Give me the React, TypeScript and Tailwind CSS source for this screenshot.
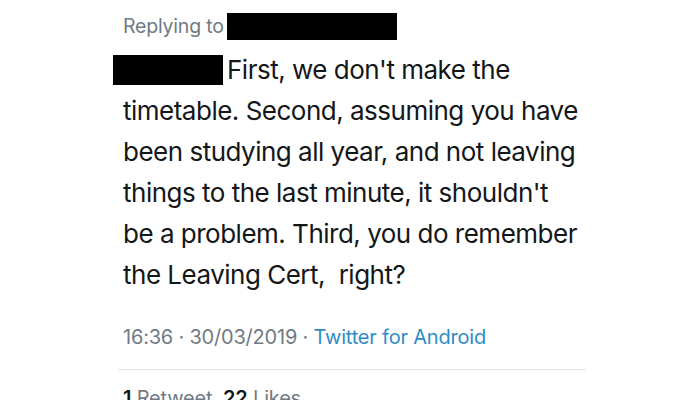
import React from 'react';

export default function App() {
  return (
    <div className="w-[700px] h-[400px] overflow-hidden bg-white" style={{ fontFamily: 'Inter, "Noto Sans", sans-serif' }}>
      <div className="pl-[123px] pr-[100px] pt-[12px]">
        {/* Reply header */}
        <div className="flex items-center h-[28px] text-[19.5px] text-[#707a84] tracking-[-0.2px]">
          <span className="translate-y-[1px]">Replying to</span>
          <span className="ml-[3px] inline-block w-[170px] h-[27px] bg-black" />
        </div>

        {/* Tweet body */}
        <p className="mt-[9px] text-[26px] leading-[41px] text-[#14171a] tracking-[-0.5px] whitespace-nowrap">
          <span className="-ml-[10px] mr-[4px] inline-block w-[110px] h-[30px] bg-black align-[-6px]" />
          First, we don't make the<br />
          timetable. Second, assuming you have<br />
          been studying all year, and not leaving<br />
          things to the last minute, it shouldn't<br />
          be a problem. Third, you do remember<br />
          the Leaving Cert,&nbsp; right?
        </p>

        {/* Meta */}
        <div className="mt-[27px] text-[20px] text-[#707a84] tracking-[-0.2px]">
          16:36 · 30/03/2019 · <span className="text-[#2f8cc6]">Twitter for Android</span>
        </div>
      </div>

      <div className="ml-[118px] w-[468px] mt-[17px] h-px bg-[#e1e4e7]" />

      <div className="pl-[123px] mt-[13px] text-[20px] text-[#707a84] tracking-[-0.2px]">
        <span className="font-semibold text-[#14171a]">1</span> Retweet&nbsp; <span className="font-semibold text-[#14171a]">22</span> Likes
      </div>
    </div>
  );
}
